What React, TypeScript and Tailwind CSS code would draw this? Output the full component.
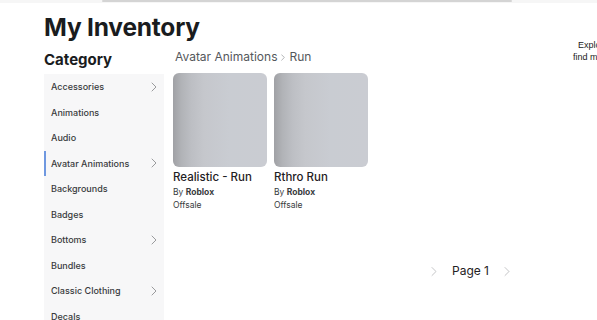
import React from "react";

type Category = { name: string; sub?: boolean };

const categories: Category[] = [
  { name: "Accessories", sub: true },
  { name: "Animations" },
  { name: "Audio" },
  { name: "Avatar Animations", sub: true },
  { name: "Backgrounds" },
  { name: "Badges" },
  { name: "Bottoms", sub: true },
  { name: "Bundles" },
  { name: "Classic Clothing", sub: true },
  { name: "Decals" },
];

const items = [
  { title: "Realistic - Run", creator: "Roblox", status: "Offsale" },
  { title: "Rthro Run", creator: "Roblox", status: "Offsale" },
];

function Chevron({ className }: { className?: string }) {
  return (
    <svg viewBox="0 0 6 10" className={className} fill="none">
      <path d="M1 1l4 4-4 4" stroke="currentColor" strokeWidth="1" strokeLinecap="round" strokeLinejoin="round" />
    </svg>
  );
}

export default function App() {
  const active = "Avatar Animations";

  return (
    <div className="w-full h-[320px] overflow-hidden bg-white text-[#393b3d] font-['Inter',sans-serif]">
      {/* top strip */}
      <div className="h-[3px] bg-[#f6f6f6]">
        <div className="ml-[102px] w-[410px] h-[2px] rounded-full bg-[#d4d4d4]" />
      </div>

      <div className="pl-[44px]">
        <h1 className="mt-[8px] text-[24.5px] leading-[32px] font-bold text-[#1a1c1e] tracking-[-0.2px]">
          My Inventory
        </h1>

        <div className="flex mt-[7px]">
          {/* sidebar */}
          <div className="w-[120px] shrink-0">
            <h2 className="text-[15px] leading-[20px] font-bold text-[#1a1c1e]">Category</h2>
            <ul className="mt-[4px] bg-[#f7f7f8]">
              {categories.map((c) => (
                <li
                  key={c.name}
                  className={
                    "flex items-center justify-between h-[25.5px] pr-[7px] text-[9px] font-medium border-l-[2px] pl-[5px] " +
                    (c.name === active ? "border-[#6f98e0]" : "border-transparent")
                  }
                >
                  <span>{c.name}</span>
                  {c.sub && <Chevron className="w-[6px] h-[10px] text-[#9a9b9d]" />}
                </li>
              ))}
            </ul>
          </div>

          {/* main */}
          <div className="ml-[9px] w-[596px] shrink-0">
            <div className="flex">
              <div className="w-[396px] shrink-0">
                <div className="flex items-center gap-[4px] pl-[2px] h-[16px] -mt-[1px] text-[12px] text-[#55585c]">
                  <span>Avatar Animations</span>
                  <Chevron className="w-[4px] h-[7px] text-[#8d8f92]" />
                  <span>Run</span>
                </div>
                <div className="flex gap-[7px] mt-[8px]">
                  {items.map((it) => (
                    <div key={it.title} className="w-[94px]">
                      <div className="h-[94px] rounded-[6px] bg-[linear-gradient(to_right,#a0a1a5_0%,#b1b3b7_9%,#bdbfc4_20%,#c5c7cc_33%,#c9ccd2_60%,#caccd2_100%)]" />
                      <div className="mt-[2px] text-[11.5px] leading-[16px] font-medium text-[#1f2124]">{it.title}</div>
                      <div className="mt-[1px] text-[8.5px] leading-[13px] text-[#393b3d]">
                        By <span className="font-bold">{it.creator}</span>
                      </div>
                      <div className="text-[8.5px] leading-[12px] text-[#393b3d]">{it.status}</div>
                    </div>
                  ))}
                </div>
              </div>
              <div className="-mt-[11px] pl-[4px] text-[9px] leading-[12px] text-[#222] font-['Liberation_Sans',sans-serif] whitespace-nowrap">
                <div className="pl-[5px]">Explore the Marketplace to</div>
                <div>find more items for your avatar</div>
              </div>
            </div>

            <div className="flex items-center justify-center gap-[15px] mt-[51px] pr-[1px]">
              <Chevron className="w-[6px] h-[11px] text-[#c4c5c7]" />
              <span className="text-[12px] text-[#1f2124]">Page 1</span>
              <Chevron className="w-[6px] h-[11px] text-[#c4c5c7]" />
            </div>
          </div>
        </div>
      </div>
    </div>
  );
}
